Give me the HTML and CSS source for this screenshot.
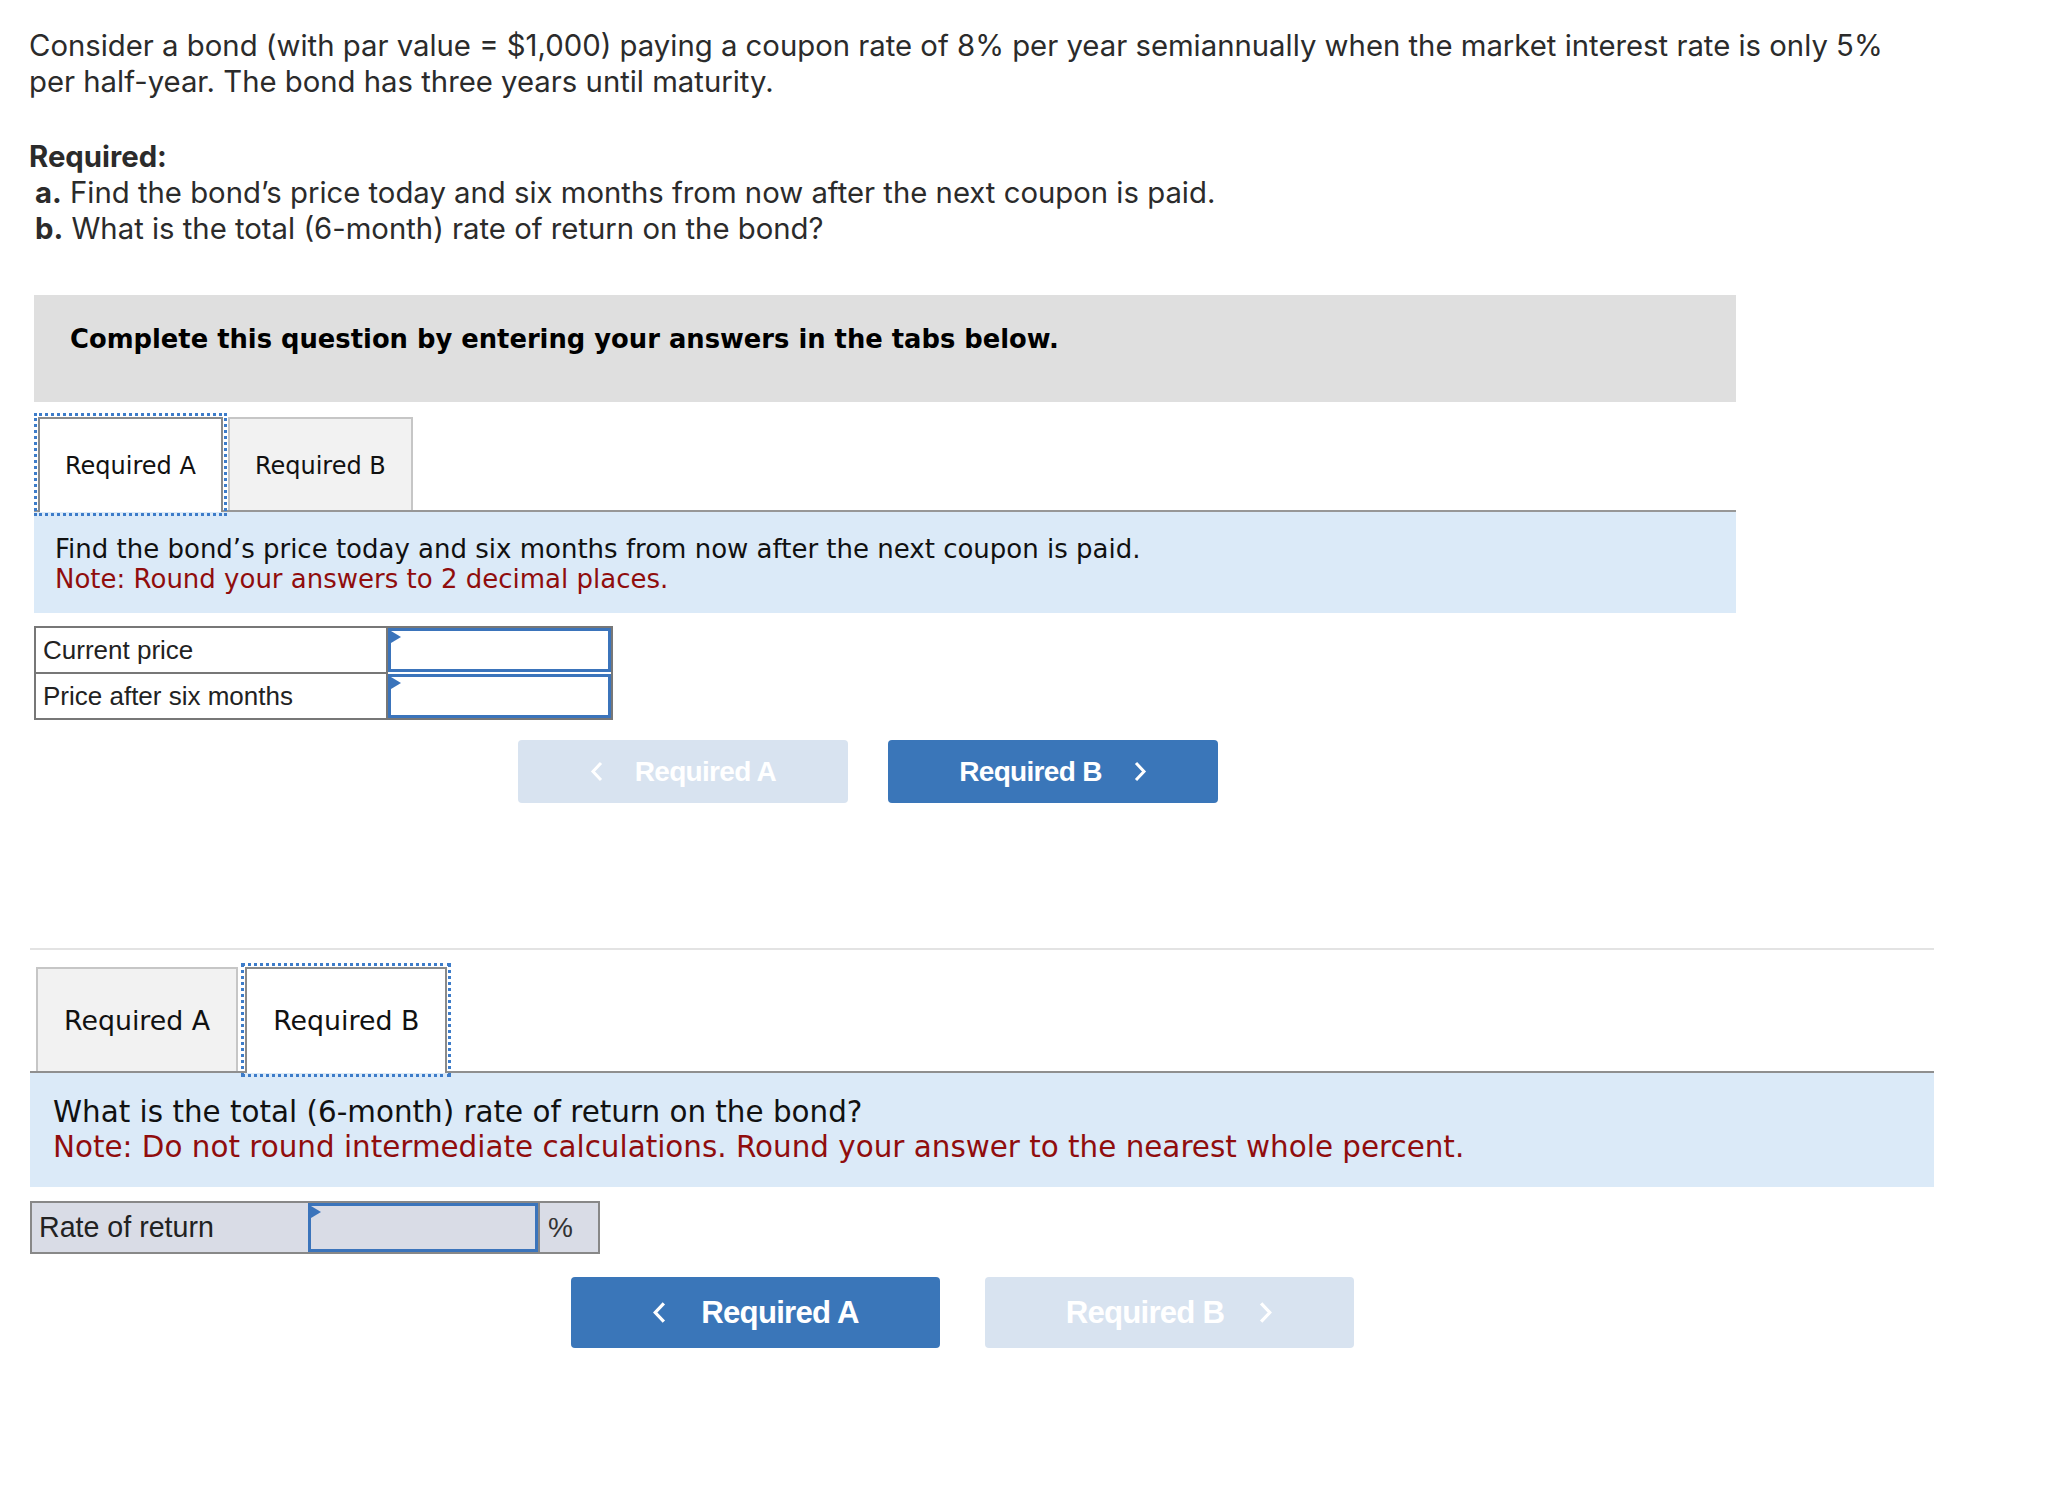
FILE: index.html
```html
<!DOCTYPE html>
<html lang="en">
<head>
<meta charset="utf-8">
<title>Bond question</title>
<link rel="stylesheet" href="styles.css">
</head>
<body>
<div class="page">
  <p class="intro">Consider a bond (with par value = $1,000) paying a coupon rate of 8% per year semiannually when the market interest rate is only 5%<br>per half-year. The bond has three years until maturity.</p>

  <div class="required">
    <div class="req-title">Required:</div>
    <div class="req-item"><b>a.</b> Find the bond’s price today and six months from now after the next coupon is paid.</div>
    <div class="req-item"><b>b.</b> What is the total (6-month) rate of return on the bond?</div>
  </div>

  <section class="panel panel-a">
    <div class="banner">Complete this question by entering your answers in the tabs below.</div>
    <div class="tabs">
      <div class="tab active">Required A</div>
      <div class="tab">Required B</div>
    </div>
    <div class="prompt">
      <div>Find the bond’s price today and six months from now after the next coupon is paid.</div>
      <div class="note">Note: Round your answers to 2 decimal places.</div>
    </div>
    <div class="answers">
      <div class="cell-label">Current price</div>
      <div class="cell-input"></div>
      <div class="cell-label row2">Price after six months</div>
      <div class="cell-input row2"></div>
    </div>
    <div class="nav">
      <button class="nav-btn disabled"><svg class="chev" viewBox="0 0 13 21"><polyline points="11,2 3,10.5 11,19"/></svg><span>Required A</span></button>
      <button class="nav-btn"><span>Required B</span><svg class="chev" viewBox="0 0 13 21"><polyline points="2,2 10,10.5 2,19"/></svg></button>
    </div>
  </section>

  <section class="panel panel-b">
    <div class="tabs">
      <div class="tab">Required A</div>
      <div class="tab active">Required B</div>
    </div>
    <div class="prompt">
      <div>What is the total (6-month) rate of return on the bond?</div>
      <div class="note">Note: Do not round intermediate calculations. Round your answer to the nearest whole percent.</div>
    </div>
    <div class="rate">
      <div class="rate-label">Rate of return</div>
      <div class="cell-input"></div>
      <div class="rate-unit">%</div>
    </div>
    <div class="nav">
      <button class="nav-btn"><svg class="chev" viewBox="0 0 13 21"><polyline points="11,2 3,10.5 11,19"/></svg><span>Required A</span></button>
      <button class="nav-btn disabled"><span>Required B</span><svg class="chev" viewBox="0 0 13 21"><polyline points="2,2 10,10.5 2,19"/></svg></button>
    </div>
  </section>
</div>
</body>
</html>
```

FILE: styles.css
```css
html, body {
  margin: 0;
  padding: 0;
  background: #ffffff;
}

.page {
  padding: 28px 0 60px 29px;
  color: #2b2b2b;
}

.intro {
  margin: 0;
  font-family: Inter, "Open Sans", "Liberation Sans", sans-serif;
  font-size: 29.3px;
  line-height: 36px;
}

.required {
  margin-top: 39px;
  font-family: Inter, "Open Sans", "Liberation Sans", sans-serif;
  font-size: 29.3px;
  line-height: 36px;
}

.req-title {
  font-weight: 700;
}

.req-item {
  padding-left: 6px;
}

.req-item b {
  font-weight: 700;
}

/* ---------- panels ---------- */
.panel-a {
  margin-top: 48px;
  margin-left: 5px;
  width: 1702px;
}

.banner {
  background: #dfdfdf;
  height: 107px;
  box-sizing: border-box;
  padding: 29px 0 0 36px;
  font-family: "DejaVu Sans", Verdana, sans-serif;
  font-weight: 700;
  font-size: 25.8px;
  line-height: 30px;
  color: #000;
}

.tabs {
  display: flex;
  gap: 5px;
  margin-top: 15px;
  padding-left: 4px;
  border-bottom: 2px solid #979797;
}

.tab {
  height: 93px;
  box-sizing: border-box;
  padding: 33px 25px 0;
  border: 2px solid #c6c6c6;
  border-bottom: 0;
  background: #f2f2f2;
  font-family: "DejaVu Sans", Verdana, sans-serif;
  font-size: 24px;
  line-height: 28px;
  color: #111;
  white-space: nowrap;
}

.tab.active {
  background: #ffffff;
  border-color: #8a8a8a;
  height: 95px;
  margin-bottom: -2px;
  outline: 3px dotted #3d7cc9;
  outline-offset: 1px;
}

.prompt {
  background: #dbeaf8;
  padding: 22px 21px 19px;
  font-family: "DejaVu Sans", Verdana, sans-serif;
  font-size: 26px;
  line-height: 30px;
  color: #111;
}

.note {
  color: #900d0d;
}

.answers {
  display: grid;
  grid-template-columns: 352px 223px;
  width: max-content;
  margin-top: 13px;
  border: 2px solid #777;
}

.cell-label {
  box-sizing: border-box;
  height: 44px;
  padding-left: 7px;
  border-right: 2px solid #777;
  font-family: "Liberation Sans", Arial, sans-serif;
  font-size: 26px;
  line-height: 44px;
  color: #222;
}

.cell-label.row2 {
  height: 46px;
  border-top: 2px solid #777;
}

.cell-input {
  position: relative;
  box-sizing: border-box;
  border: 3px solid #3b74bb;
}

.answers .cell-input.row2 {
  margin-top: 2px;
}

.cell-input::before {
  content: "";
  position: absolute;
  left: 0;
  top: 0;
  border-left: 10px solid #3b74bb;
  border-top: 6px solid transparent;
  border-bottom: 6px solid transparent;
}

.nav {
  display: flex;
  gap: 40px;
  margin-top: 20px;
  padding-left: 484px;
}

.nav-btn {
  width: 330px;
  height: 63px;
  border: 0;
  border-radius: 4px;
  background: #3a76b9;
  color: #ffffff;
  display: flex;
  align-items: center;
  justify-content: center;
  gap: 32px;
  padding: 0;
  font-family: "Liberation Sans", Arial, sans-serif;
  font-weight: 700;
  font-size: 28px;
  letter-spacing: -0.7px;
}

.nav-btn.disabled {
  background: #d8e3f0;
}

.chev {
  width: 13px;
  height: 21px;
  fill: none;
  stroke: #ffffff;
  stroke-width: 3;
}

/* ---------- second panel ---------- */
.panel-b {
  margin-top: 145px;
  margin-left: 1px;
  width: 1904px;
  border-top: 2px solid #e3e3e3;
}

.panel-b .tabs {
  margin-top: 17px;
  padding-left: 6px;
  gap: 7px;
  border-bottom-color: #8f8f8f;
}

.panel-b .tab {
  height: 104px;
  padding: 36px 26px 0;
  font-size: 26.8px;
  line-height: 31px;
}

.panel-b .tab.active {
  height: 106px;
}

.panel-b .prompt {
  padding: 22px 23px 22px;
  font-size: 29.4px;
  line-height: 35px;
}

.rate {
  display: grid;
  grid-template-columns: 276px 230px 60px;
  height: 53px;
  box-sizing: border-box;
  width: max-content;
  margin-top: 14px;
  border: 2px solid #888;
  background: #d9dce6;
}

.rate-label {
  padding-left: 7px;
  font-family: "Liberation Sans", Arial, sans-serif;
  font-size: 28.6px;
  line-height: 49px;
  color: #222;
}

.rate-unit {
  border-left: 2px solid #888;
  padding-left: 8px;
  font-family: "Liberation Sans", Arial, sans-serif;
  font-size: 28px;
  line-height: 49px;
  color: #333;
}

.panel-b .nav {
  gap: 45px;
  margin-top: 23px;
  padding-left: 541px;
}

.panel-b .nav-btn {
  width: 369px;
  height: 71px;
  gap: 35px;
  font-size: 31.2px;
  letter-spacing: -0.78px;
}

.panel-b .chev {
  width: 14px;
  height: 23px;
}
```
